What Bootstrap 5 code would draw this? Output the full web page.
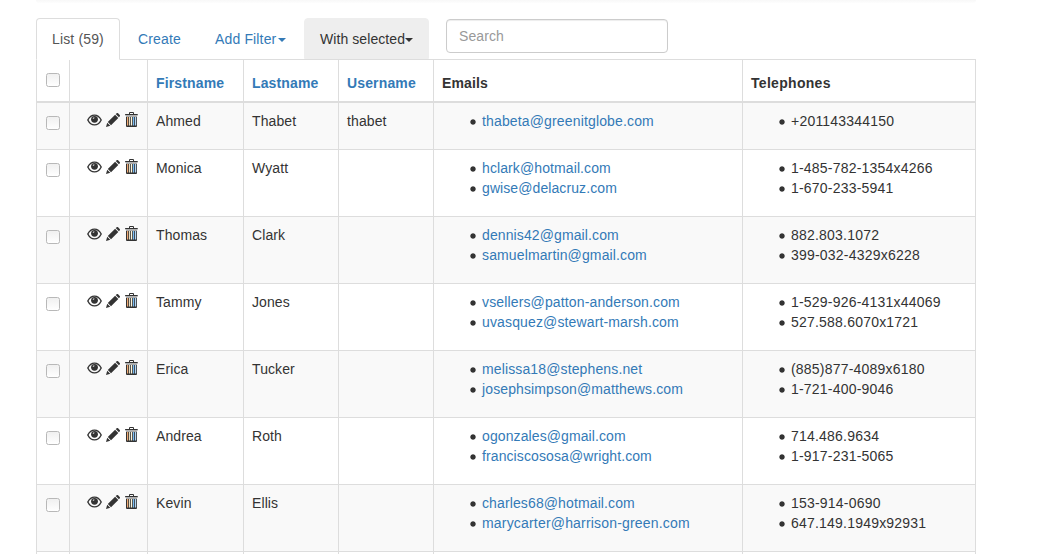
<!DOCTYPE html>
<html lang="en">
<head>
<meta charset="utf-8">
<meta name="viewport" content="width=device-width, initial-scale=1">
<title>Users</title>
<link href="https://cdn.jsdelivr.net/npm/bootstrap@5.3.0/dist/css/bootstrap.min.css" rel="stylesheet">
<style>
html,body{height:100%;overflow:hidden}
body{font-family:"Liberation Sans",Arial,sans-serif;font-size:14px;line-height:20px;color:#333;background:#fff}
a{color:#337ab7;text-decoration:none}
.page{width:940px;height:554px;overflow:hidden;margin-left:36px}
.topbar{height:3px;margin-bottom:15px;background:linear-gradient(#f8f8f8,#fdfdfd);border-radius:0 0 4px 4px}
.nav-tabs{height:42px;border-bottom:1px solid #ddd;flex-wrap:nowrap}
.nav-tabs .nav-link{height:42px;padding:10px 0 10px 15px;margin:0 2px 0 0;color:#337ab7;border:1px solid transparent;border-radius:4px 4px 0 0;white-space:nowrap;line-height:20px;letter-spacing:.15px}
.nav-tabs .nav-link.active{color:#555;background:#fff;border-color:#ddd #ddd #fff}
.nav-tabs .nav-link.picked{height:41px;background:#eee;color:#333;border-color:#eee;letter-spacing:.08px}
.tab-list{width:84px}.tab-create{width:75px}.tab-filter{width:103px}.picked{width:125px}
.caret{display:inline-block;vertical-align:middle;border-top:4px solid;border-left:4px solid transparent;border-right:4px solid transparent}
.tab-filter .caret{margin-left:1.5px}
.nav-tabs .form-control{width:222px;height:34px;margin:1px 0 0 15px;padding:6px 12px;font-size:14px;line-height:20px;border:1px solid #ccc;border-radius:4px;box-shadow:inset 0 1px 1px rgba(0,0,0,.075);letter-spacing:.1px}
.form-control::placeholder{color:#999}
.users{width:940px;table-layout:fixed;border-collapse:separate;border-spacing:0;border-left:1px solid #ddd;margin:0;color:#333;--bs-table-bg:transparent}
.users>:not(caption)>*>*{padding:8px;border:0 solid #ddd;border-width:0 1px 1px 0;box-shadow:none;color:#333}
.users>thead>tr>th{height:43px;border-bottom-width:2px;vertical-align:bottom;letter-spacing:.14px}
.users>thead>tr>th:last-child{letter-spacing:.3px}
.users>tbody>tr>td{vertical-align:top;letter-spacing:.1px}
.users>tbody>tr>td:last-child{letter-spacing:.21px}
.users>tbody>tr:nth-child(odd)>td{background:#f9f9f9}
.users ul{list-style:none;margin:0 0 10px;padding-left:28px}
.users li::before{content:"";width:6px;height:6px;margin:2px 6px 0 0;background:radial-gradient(circle,#333 2.2px,transparent 3.1px)}
.users .form-check-input{display:block;width:14px;height:14px;margin:5px 0 0 1px;border:1px solid #b8b8b8;border-radius:2.5px;background:linear-gradient(#f0f0f0,#fff)}
.users thead .form-check-input{margin:0 0 6px 1px}
.tools{height:18px;padding-left:9px}
.tools svg{display:block;flex:none;fill:#333}
.tools svg:last-child{margin-top:-1px}
</style>
</head>
<body>
<svg class="d-none">
<symbol id="eye" viewBox="0 0 15 12"><path fill="none" stroke="#333" stroke-width="1.4" stroke-linejoin="round" d="M.8 6C2.500 2.600 4.800 1.100 7.500 1.100S12.500 2.600 14.200 6C12.500 9.400 10.200 10.900 7.500 10.900S2.500 9.400.8 6Z"/><circle cx="7.500" cy="5.300" r="3.400"/><path fill="#fff" d="M5.700 5A1.900 1.900 0 0 1 7.300 3.200V4.300Z"/></symbol>
<symbol id="pencil" viewBox="0 0 14 14"><path d="M0 14 1.200 9.700 4.300 12.800ZM1.800 9 9.100 1.700 12.300 4.900 5 12.200ZM9.700 1.100 10.700.2Q11.400-.3 12.100.3L13.700 1.900Q14.300 2.600 13.800 3.300L12.900 4.300Z"/></symbol>
<symbol id="trash" viewBox="0 0 13 15"><path fill-rule="evenodd" d="M0 3.200V2.200Q0 2 1 2H4V1Q4 0 5 0H8Q9 0 9 1V2H12Q13 2 13 3.200ZM5 2H8V1H5Z"/><path fill="#aaa" d="M1 3.200h11V5H1z"/><path d="M1 5H12V14Q12 15 11 15H2Q1 15 1 14Z"/><path fill="#eda873" d="M2 5h1.200v8.500H2z"/><path fill="#e3dcc2" d="M4 5h1.200v8.500H4z"/><path fill="#fbf6df" d="M6 5h1.200v8.500H6z"/><path fill="#78bcf5" d="M8 5h1.200v8.500H8z"/><path fill="#b5d4f0" d="M10 5h1.200v8.500H10z"/></symbol>
</svg>
<div class="page">
<div class="topbar"></div>
<ul class="nav nav-tabs">
<li class="nav-item"><a class="nav-link active tab-list" href="#">List (59)</a></li>
<li class="nav-item"><a class="nav-link tab-create" href="#">Create</a></li>
<li class="nav-item"><a class="nav-link tab-filter" href="#">Add Filter<b class="caret"></b></a></li>
<li class="nav-item"><a class="nav-link picked" href="#">With selected<b class="caret"></b></a></li>
<li class="nav-item"><input class="form-control" type="text" placeholder="Search"></li>
</ul>
<table class="table users">
<colgroup><col style="width:33px"><col style="width:78px"><col style="width:96px"><col style="width:95px"><col style="width:95px"><col style="width:309px"><col style="width:233px"></colgroup>
<thead><tr><th><input class="form-check-input" type="checkbox"></th><th></th><th><a href="#">Firstname</a></th><th><a href="#">Lastname</a></th><th><a href="#">Username</a></th><th>Emails</th><th>Telephones</th></tr></thead>
<tbody id="rows"></tbody>
</table>
</div>
<script>
// Each email is stored with its tracking in px.
const users = [
["Ahmed","Thabet","thabet",[["thabeta@greenitglobe.com",.15]],["+201143344150"]],
["Monica","Wyatt","",[["hclark@hotmail.com",.1],["gwise@delacruz.com",.09]],["1-485-782-1354x4266","1-670-233-5941"]],
["Thomas","Clark","",[["dennis42@gmail.com",.11],["samuelmartin@gmail.com",.13]],["882.803.1072","399-032-4329x6228"]],
["Tammy","Jones","",[["vsellers@patton-anderson.com",.14],["uvasquez@stewart-marsh.com",.14]],["1-529-926-4131x44069","527.588.6070x1721"]],
["Erica","Tucker","",[["melissa18@stephens.net",.13],["josephsimpson@matthews.com",.12]],["(885)877-4089x6180","1-721-400-9046"]],
["Andrea","Roth","",[["ogonzales@gmail.com",.1],["franciscososa@wright.com",.1]],["714.486.9634","1-917-231-5065"]],
["Kevin","Ellis","",[["charles68@hotmail.com",.12],["marycarter@harrison-green.com",.185]],["153-914-0690","647.149.1949x92931"]],
["","","",[],[]]
];
document.getElementById("rows").innerHTML = users.map(([f,l,u,e,t]) => `<tr>
<td><input class="form-check-input" type="checkbox"></td>
<td><div class="tools d-flex align-items-center"><svg width="15" height="12"><use href="#eye"/></svg><svg width="14" height="14" style="margin-left:4px"><use href="#pencil"/></svg><svg width="13" height="15" style="margin-left:5px"><use href="#trash"/></svg></div></td>
<td>${f}</td><td>${l}</td><td>${u}</td>
<td><ul>${e.map(([x,s]) => `<li class="d-flex align-items-center"><a href="#" style="letter-spacing:${s}px">${x}</a></li>`).join("")}</ul></td>
<td><ul>${t.map(x => `<li class="d-flex align-items-center">${x}</li>`).join("")}</ul></td></tr>`).join("");
</script>
<script src="https://cdn.jsdelivr.net/npm/bootstrap@5.3.0/dist/js/bootstrap.bundle.min.js"></script>
</body>
</html>
